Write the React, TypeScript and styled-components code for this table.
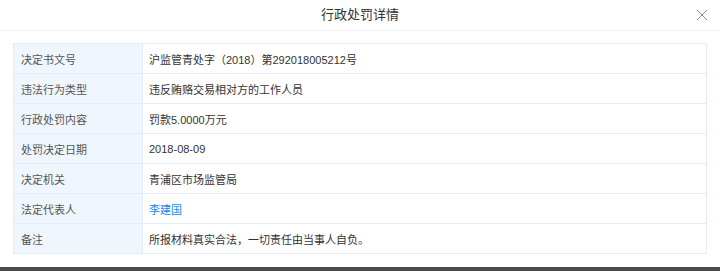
import React from "react";
import styled, { createGlobalStyle } from "styled-components";

const Global = createGlobalStyle`
  html, body {
    margin: 0;
    padding: 0;
    background: #4b4b4b;
  }
  body {
    font-family: "Liberation Sans", "Noto Sans CJK SC", sans-serif;
    -webkit-font-smoothing: antialiased;
  }
`;

const Modal = styled.div`
  width: 720px;
  height: 267px;
  background: #fff;
  display: flex;
  flex-direction: column;
  box-sizing: border-box;
`;

const Header = styled.div`
  height: 31px;
  flex: none;
  box-sizing: border-box;
  border-bottom: 1px solid #eef0f3;
  display: flex;
  align-items: center;
  justify-content: center;
  position: relative;
`;

const Title = styled.h3`
  margin: 0;
  font-size: 13px;
  font-weight: normal;
  color: #333;
  line-height: 30px;
`;

const Close = styled.button`
  position: absolute;
  right: 12px;
  top: 9px;
  width: 12px;
  height: 12px;
  padding: 0;
  border: 0;
  background: none;
  display: flex;
  align-items: center;
  justify-content: center;
`;

const Body = styled.div`
  padding: 12px 13px 0 13px;
`;

const Table = styled.table`
  width: 694px;
  border-collapse: collapse;
  font-size: 11px;
`;

const Row = styled.tr`
  height: 30px;
`;

const Label = styled.td`
  width: 114px;
  padding: 0 7px;
  border: 1px solid #e4edf7;
  background: #f0f6fd;
  color: #555;
  vertical-align: middle;
`;

const Value = styled.td<{ $link?: boolean }>`
  padding: 0 6px;
  border: 1px solid #e4edf7;
  color: ${(p) => (p.$link ? "#128bed" : "#333")};
  vertical-align: middle;
`;

const rows: { label: string; value: string; link?: boolean }[] = [
  { label: "决定书文号", value: "沪监管青处字（2018）第292018005212号" },
  { label: "违法行为类型", value: "违反贿赂交易相对方的工作人员" },
  { label: "行政处罚内容", value: "罚款5.0000万元" },
  { label: "处罚决定日期", value: "2018-08-09" },
  { label: "决定机关", value: "青浦区市场监管局" },
  { label: "法定代表人", value: "李建国", link: true },
  { label: "备注", value: "所报材料真实合法，一切责任由当事人自负。" },
];

export default function App() {
  return (
    <>
      <Global />
      <Modal>
        <Header>
          <Title>行政处罚详情</Title>
          <Close aria-label="关闭">
            <svg width="12" height="12" viewBox="0 0 12 12">
              <path d="M1 1 L11 11 M11 1 L1 11" stroke="#888" strokeWidth="1" fill="none" />
            </svg>
          </Close>
        </Header>
        <Body>
          <Table>
            <tbody>
              {rows.map((r) => (
                <Row key={r.label}>
                  <Label>{r.label}</Label>
                  <Value $link={r.link}>{r.value}</Value>
                </Row>
              ))}
            </tbody>
          </Table>
        </Body>
      </Modal>
    </>
  );
}
